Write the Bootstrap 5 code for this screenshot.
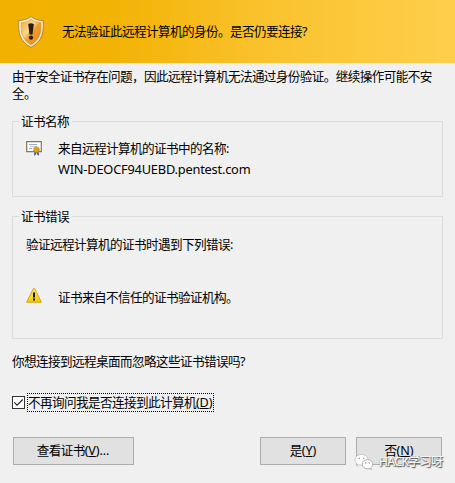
<!DOCTYPE html>
<html lang="zh-CN">
<head>
<meta charset="utf-8">
<title>远程桌面连接</title>
<meta name="viewport" content="width=device-width, initial-scale=1">
<link href="https://cdn.jsdelivr.net/npm/bootstrap@5.3.0/dist/css/bootstrap.min.css" rel="stylesheet">
<style>
body { font-family: "Noto Sans", "Noto Sans CJK SC", sans-serif; font-size: 12.6px; letter-spacing: -.6px; line-height: 17px; color: #000; background: #f0f0f0; }
.dialog { width: 455px; height: 483px; background: #f0f0f0; }
.banner { height: 63px; padding-left: 18px; background: linear-gradient(90deg, #f2b100 0%, #f3b305 25%, #f9c22c 57%, #ffcf4c 100%); }
.banner-text { margin-left: 16px; }
.dialog-body { padding: 5px 12px 0; }
.group { width: 431px; border: 1px solid #dcdcdc; }
.group-name { padding: 0 3px 0 2px; margin-left: -7px; font-size: 12.6px; line-height: 17px; }
.group-one { height: 84px; margin-top: 11px; padding: 10px 13px 0; }
.group-two { height: 131px; margin-top: 11px; padding: 11px 13px 0; }
.gap-icon { gap: 16px; }
.host { font-size: 12.8px; letter-spacing: -.2px; margin-top: 4px; }
.warn-row { margin-top: 35px; }
.warn-text { padding-top: 1px; }
.question { margin-top: 14px; }
.check-row { margin-top: 22px; height: 20px; }
.tick { width: 13px; height: 13px; flex: none; margin: 0 2px 0 0; border: 1px solid #333; background: #fff; }
.focus-text { width: 187px; height: 19px; line-height: 17px; border: 1px dotted #000; }
.key { letter-spacing: -.1px; }
.buttons { margin-top: 25px; padding: 0 1px; }
.dialog .btn { height: 28px; padding: 0; border: 1px solid #adadad; border-radius: 0; background: #e1e1e1; color: #000; font-size: inherit; line-height: 26px; letter-spacing: inherit; }
.dialog .btn-view { width: 121px; padding-right: 1px; }
.btn-answer { width: 86px; }
.btn-no { margin-left: 10px; }
.watermark { left: 354px; top: 453px; gap: 5px; color: #fff; font-size: 12px; letter-spacing: -.5px; line-height: 18px; text-shadow: 1px 1px 1px #555, 0 1px 1px #888; pointer-events: none; }
svg { display: block; flex: none; }
</style>
</head>
<body>
<main class="dialog position-relative overflow-hidden">
  <header class="banner d-flex align-items-center">
    <svg width="28" height="32" viewBox="0 0 28 32" aria-hidden="true">
      <defs>
        <linearGradient id="shieldFill" x1="0" y1="0" x2="1" y2="1"><stop offset="0" stop-color="#f3a93c"/><stop offset=".4" stop-color="#fbd58a"/><stop offset=".55" stop-color="#f09a2c"/><stop offset="1" stop-color="#ea8a14"/></linearGradient>
        <linearGradient id="shieldRim" x1="0" y1="0" x2="1" y2="1"><stop offset="0" stop-color="#fffdf0"/><stop offset="1" stop-color="#e9dcb8"/></linearGradient>
      </defs>
      <path d="M13 .6C10 3.200 5.500 4.500.8 4.600.1 16 1.200 25 13 31.400 24.800 25 25.900 16 25.200 4.600 20.500 4.500 16 3.200 13 .6Z" fill="url(#shieldRim)" stroke="#a5781e" stroke-width=".8"/>
      <path d="M13 3.400C10 5.600 6.500 6.500 3.200 6.700 2.800 16.500 4 23.500 13 28.700 22 23.500 23.200 16.500 22.800 6.700 19.500 6.500 16 5.600 13 3.400Z" fill="url(#shieldFill)" stroke="#d08a22" stroke-width=".6"/>
      <path d="M10.200 8Q13 6.400 15.800 8L14.500 18.500H11.500Z" fill="#2a1c10"/>
      <circle cx="13" cy="21.700" r="2.100" fill="#2a1c10"/>
    </svg>
    <div class="banner-text">无法验证此远程计算机的身份。是否仍要连接?</div>
  </header>

  <div class="dialog-body">
    <div>由于安全证书存在问题，因此远程计算机无法通过身份验证。继续操作可能不安<br>全。</div>

    <fieldset class="group group-one">
      <legend class="group-name float-none w-auto mb-0">证书名称</legend>
      <div class="d-flex gap-icon">
        <svg width="16" height="17" viewBox="0 0 16 17" aria-hidden="true">
          <path d="M.7 1.700h14.600v10H.7z" fill="#fff" stroke="#8a7657" stroke-width="1.200"/>
          <path d="M3 4.500h8M3 8.500h3" stroke="#9da8c4" stroke-width="1"/>
          <path d="M4 6.500h7" stroke="#c8cddd" stroke-width="1"/>
          <path d="M8.500 11l-.5 4.800 1.700-1 .8-2.500.8 2.500 1.700 1-.5-4.800z" fill="#38589b"/>
          <circle cx="10.500" cy="9.800" r="2.900" fill="#dba414" stroke="#a9780b" stroke-width=".6"/>
        </svg>
        <div>
          <div>来自远程计算机的证书中的名称:</div>
          <div class="host">WIN-DEOCF94UEBD.pentest.com</div>
        </div>
      </div>
    </fieldset>

    <fieldset class="group group-two">
      <legend class="group-name float-none w-auto mb-0">证书错误</legend>
      <div>验证远程计算机的证书时遇到下列错误:</div>
      <div class="warn-row d-flex gap-icon">
        <svg width="16" height="16" viewBox="0 0 16 16" aria-hidden="true">
          <defs><linearGradient id="warnFill" x1="0" y1="0" x2="0" y2="1"><stop offset="0" stop-color="#ffec6b"/><stop offset="1" stop-color="#f5c900"/></linearGradient></defs>
          <path d="M7.400.6h1.200L15.400 14.200H.6Z" fill="url(#warnFill)" stroke="#d2a411" stroke-width="1" stroke-linejoin="round"/>
          <path d="M7 4.500h2v5H7zM7 10.500h2v2H7z" fill="#111"/>
        </svg>
        <div class="warn-text">证书来自不信任的证书验证机构。</div>
      </div>
    </fieldset>

    <div class="question">你想连接到远程桌面而忽略这些证书错误吗?</div>

    <div class="check-row d-flex align-items-center">
      <div class="tick" role="checkbox" aria-checked="true" aria-label="不再询问"><svg width="11" height="11" viewBox="0 0 11 11"><path d="M1.300 5.300L4.100 8.100 9.700 2.500" fill="none" stroke="#222" stroke-width="1.100"/></svg></div>
      <div class="focus-text text-nowrap">不再询问我是否连接到此计算机<span class="key">(<u>D</u>)</span></div>
    </div>

    <div class="buttons d-flex">
      <button type="button" class="btn btn-view">查看证书<span class="key">(<u>V</u>)...</span></button>
      <button type="button" class="btn btn-answer ms-auto">是<span class="key">(<u>Y</u>)</span></button>
      <button type="button" class="btn btn-answer btn-no">否<span class="key">(<u>N</u>)</span></button>
    </div>
  </div>

  <div class="watermark position-absolute d-flex align-items-center text-nowrap">
    <svg width="20" height="18" viewBox="0 0 20 18" aria-hidden="true">
      <path d="M7.500 1.500C3.800 1.500 1 3.800 1 6.800c0 1.800 1 3.200 2.400 4.200L2.800 13l2.500-1.200c.8.2 1.500.3 2.200.3 3.700 0 6.500-2.300 6.500-5.300S11.200 1.500 7.500 1.500Z" fill="#fff" stroke="#b5b5b5" stroke-width=".7"/>
      <path d="M13.500 6.600c-3 0-5.300 2-5.300 4.600s2.300 4.600 5.300 4.600c.6 0 1.200-.1 1.800-.3l2 1-.5-1.800c1.200-.8 2-2.100 2-3.500 0-2.600-2.300-4.600-5.300-4.600Z" fill="#fff" stroke="#999" stroke-width=".8"/>
      <g fill="#888"><circle cx="5.300" cy="5.300" r=".8"/><circle cx="9.800" cy="5.300" r=".8"/><circle cx="11.700" cy="10" r=".7"/><circle cx="15.300" cy="10" r=".7"/></g>
    </svg>
    <span>HACK学习呀</span>
  </div>
</main>
<script src="https://cdn.jsdelivr.net/npm/bootstrap@5.3.0/dist/js/bootstrap.bundle.min.js"></script>
</body>
</html>
